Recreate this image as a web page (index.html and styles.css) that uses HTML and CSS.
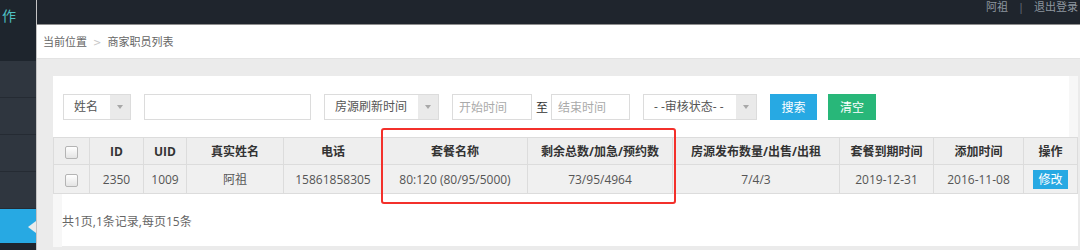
FILE: index.html
```html
<!DOCTYPE html>
<html lang="zh-CN">
<head>
  <meta charset="UTF-8" />
  <title>商家职员列表</title>
  <link rel="stylesheet" href="styles.css">
</head>
<body>
  <div class="layout">
    <aside class="sidebar">
      <div class="brand"><span>作</span></div>
      <ul class="side-nav">
        <li></li>
        <li></li>
        <li></li>
        <li></li>
        <li class="active"></li>
      </ul>
    </aside>

    <div class="main">
      <header class="topbar">
        <div class="user">阿祖<span class="sep">|</span>退出登录</div>
      </header>

      <div class="crumb">当前位置<span class="crumb-arrow">&gt;</span>商家职员列表</div>

      <div class="content">
        <div class="panel">
          <form class="search">
            <div class="select w-name"><span class="select-text">姓名</span><span class="select-arrow"></span></div>
            <input class="input w-keyword" type="text" />
            <div class="select w-time"><span class="select-text">房源刷新时间</span><span class="select-arrow"></span></div>
            <div class="date-range">
              <input class="input w-date" type="text" placeholder="开始时间" />
              <span class="to">至</span>
              <input class="input w-date2" type="text" placeholder="结束时间" />
            </div>
            <div class="select w-status"><span class="select-text">- -审核状态- -</span><span class="select-arrow"></span></div>
            <button class="btn btn-blue" type="button">搜索</button>
            <button class="btn btn-green btn-clear" type="button">清空</button>
          </form>

          <div class="table-wrap">
            <table class="grid">
              <colgroup>
                <col style="width:36px"><col style="width:54px"><col style="width:43px">
                <col style="width:97px"><col style="width:99px"><col style="width:145px">
                <col style="width:145px"><col style="width:167px"><col style="width:94px">
                <col style="width:90px"><col style="width:54px">
              </colgroup>
              <thead>
                <tr>
                  <th><span class="check"></span></th>
                  <th>ID</th>
                  <th>UID</th>
                  <th>真实姓名</th>
                  <th>电话</th>
                  <th>套餐名称</th>
                  <th>剩余总数/加急/预约数</th>
                  <th>房源发布数量/出售/出租</th>
                  <th>套餐到期时间</th>
                  <th>添加时间</th>
                  <th>操作</th>
                </tr>
              </thead>
              <tbody>
                <tr>
                  <td><span class="check"></span></td>
                  <td>2350</td>
                  <td>1009</td>
                  <td>阿祖</td>
                  <td>15861858305</td>
                  <td>80:120 (80/95/5000)</td>
                  <td>73/95/4964</td>
                  <td>7/4/3</td>
                  <td>2019-12-31</td>
                  <td>2016-11-08</td>
                  <td><a class="edit">修改</a></td>
                </tr>
              </tbody>
            </table>
            <div class="mark"></div>
          </div>

          <div class="pager">共1页,1条记录,每页15条</div>
        </div>
      </div>
    </div>
  </div>
</body>
</html>
```

FILE: styles.css
```css
html, body {
  margin: 0;
  padding: 0;
  width: 1080px;
  height: 250px;
  overflow: hidden;
  background-color: #ebebeb;
  font-family: "Open Sans", "Noto Sans CJK SC", sans-serif;
  font-size: 12px;
  color: #555;
}

.layout {
  display: flex;
  height: 250px;
}

/* sidebar */
.sidebar {
  width: 36px;
  flex-shrink: 0;
  background-color: #1f252d;
  overflow: hidden;
}

.brand {
  height: 61px;
  background-color: #1e252d;
  overflow: hidden;
  white-space: nowrap;
}

.brand span {
  display: block;
  padding: 8px 0 0 2px;
  font-size: 14px;
  line-height: 16px;
  color: #4fc0c4;
}

.side-nav {
  list-style: none;
  margin: 0;
  padding: 0;
}

.side-nav li {
  height: 36px;
  background-color: #2f363f;
  border-bottom: 1px solid #252b33;
}

.side-nav li.active {
  position: relative;
  height: 34px;
  background-color: #27a9e3;
  border-bottom: none;
}

.side-nav li.active::after {
  content: "";
  position: absolute;
  right: 0;
  top: 12px;
  border-top: 6px solid transparent;
  border-bottom: 6px solid transparent;
  border-right: 8px solid #ebebeb;
}

/* main column */
.main {
  flex: 1;
  display: flex;
  flex-direction: column;
  border-left: 1px solid #c4c4c4;
  min-width: 0;
}

.topbar {
  height: 24px;
  background-color: #1f252d;
  border-bottom: 1px solid #8e8e8e;
  display: flex;
  justify-content: flex-end;
}

.user {
  padding-right: 2px;
  font-size: 11px;
  line-height: 14px;
  color: #8d969f;
}

.sep {
  margin: 0 10px;
  color: #6b737c;
}

.crumb {
  height: 33px;
  line-height: 33px;
  padding-left: 6px;
  background-color: #fff;
  border-bottom: 1px solid #e3e3e3;
  font-size: 11px;
  color: #666;
}

.crumb-arrow {
  margin: 0 6px;
  color: #c8c8c8;
  font-family: "DejaVu Sans", sans-serif;
  font-size: 10px;
}

.content {
  flex: 1;
  padding: 17px 2px 4px 16px;
}

.panel {
  background-color: #fff;
  height: 170px;
}

/* search form */
.search {
  display: flex;
  align-items: center;
  gap: 13px;
  margin: 0;
  padding: 18px 0 17px 10px;
  border-right: 9px solid #f7f7f7;
}

.select {
  display: flex;
  height: 26px;
  box-sizing: border-box;
  border: 1px solid #dcdcdc;
  background-color: #fff;
}

.select-text {
  flex: 1;
  padding-left: 10px;
  line-height: 24px;
  color: #555;
  white-space: nowrap;
}

.select-arrow {
  position: relative;
  width: 20px;
  background-color: #eaeaea;
}

.select-arrow::after {
  content: "";
  position: absolute;
  left: 7px;
  top: 10px;
  border-left: 3px solid transparent;
  border-right: 3px solid transparent;
  border-top: 4px solid #a8a8a8;
}

.w-name { width: 68px; }
.w-time { width: 115px; }
.w-status { width: 114px; }

.input {
  height: 26px;
  box-sizing: border-box;
  margin: 0;
  padding: 0 0 0 6px;
  border: 1px solid #dcdcdc;
  font-family: inherit;
  font-size: 12px;
  color: #555;
  outline: none;
}

.input::placeholder {
  color: #aaa;
}

.w-keyword { width: 167px; }
.w-date { width: 80px; }
.w-date2 { width: 79px; }

.date-range {
  display: flex;
  align-items: center;
}

.to {
  margin: 0 3px 0 4px;
  color: #333;
}

.btn {
  height: 26px;
  border: none;
  padding: 0;
  font-family: inherit;
  font-size: 12px;
  color: #fff;
}

.btn-blue {
  width: 47px;
  background-color: #27a9e3;
}

.btn-green {
  width: 48px;
  background-color: #28b779;
}

.btn-clear {
  margin-left: -2px;
}

/* table */
.table-wrap {
  position: relative;
}

.grid {
  width: 1024px;
  border-collapse: collapse;
  table-layout: fixed;
}

.grid th,
.grid td {
  border: 1px solid #dcdcdc;
  text-align: center;
  padding: 0;
  white-space: nowrap;
}

.grid th {
  height: 26px;
  background-color: #eeeeee;
  color: #333;
  font-weight: bold;
}

.grid td {
  height: 28px;
  background-color: #f0f0f0;
  color: #555;
}

.check {
  display: inline-block;
  width: 11px;
  height: 11px;
  border: 1px solid #b4b4b4;
  border-radius: 2px;
  background: linear-gradient(#ffffff, #e4e4e4);
  vertical-align: middle;
}

.edit {
  display: inline-block;
  padding: 0 5px;
  height: 19px;
  line-height: 19px;
  background-color: #27a9e3;
  color: #fff;
  font-size: 12px;
}

.mark {
  position: absolute;
  left: 328px;
  top: -9px;
  width: 295px;
  height: 76px;
  box-sizing: border-box;
  border: 2px solid #f3302b;
  border-radius: 3px;
}

.pager {
  height: 53px;
  box-sizing: border-box;
  padding-top: 20px;
  line-height: 16px;
  border-left: 9px solid #f7f7f7;
  color: #666;
}
```
